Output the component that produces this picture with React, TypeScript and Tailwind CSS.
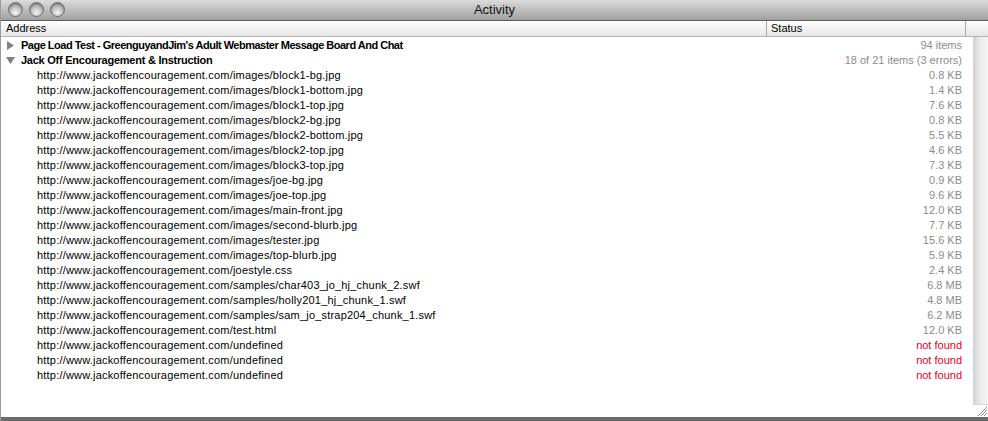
const files = [
  "images/block1-bg.jpg|0.8 KB",
  "images/block1-bottom.jpg|1.4 KB",
  "images/block1-top.jpg|7.6 KB",
  "images/block2-bg.jpg|0.8 KB",
  "images/block2-bottom.jpg|5.5 KB",
  "images/block2-top.jpg|4.6 KB",
  "images/block3-top.jpg|7.3 KB",
  "images/joe-bg.jpg|0.9 KB",
  "images/joe-top.jpg|9.6 KB",
  "images/main-front.jpg|12.0 KB",
  "images/second-blurb.jpg|7.7 KB",
  "images/tester.jpg|15.6 KB",
  "images/top-blurb.jpg|5.9 KB",
  "joestyle.css|2.4 KB",
  "samples/char403_jo_hj_chunk_2.swf|6.8 MB",
  "samples/holly201_hj_chunk_1.swf|4.8 MB",
  "samples/sam_jo_strap204_chunk_1.swf|6.2 MB",
  "test.html|12.0 KB",
  "undefined|not found",
  "undefined|not found",
  "undefined|not found",
];

function Light() {
  return (
    <div className="w-[15px] h-[15px] rounded-full border border-[#6e6e6e] bg-[radial-gradient(circle_at_50%_75%,#f4f4f4_0%,#c4c4c4_45%,#8a8a8a_100%)] shadow-[inset_0_1px_2px_rgba(0,0,0,0.35)]" />
  );
}

function Triangle({ open }: { open?: boolean }) {
  return (
    <svg width="9" height="9" viewBox="0 0 9 9" className="shrink-0">
      {open ? (
        <polygon points="0,1 9,1 4.5,8" fill="#808080" />
      ) : (
        <polygon points="1,0 8,4.5 1,9" fill="#808080" />
      )}
    </svg>
  );
}

export default function App() {
  return (
    <div
      className="w-[988px] h-[421px] flex flex-col overflow-hidden bg-white border-l border-[#9a9a9a] text-[11px] text-black"
      style={{ fontFamily: '"Liberation Sans", Arial, sans-serif' }}
    >
      {/* title bar */}
      <div className="relative h-[21px] shrink-0 flex items-center justify-center bg-gradient-to-b from-[#dcdcdc] to-[#a0a0a0] border-b border-[#5c5c5c]">
        <div className="absolute left-[7px] top-[2px] flex gap-[6px]">
          <Light />
          <Light />
          <Light />
        </div>
        <span className="text-[13px] text-[#111]">Activity</span>
      </div>

      {/* column header */}
      <div className="h-[16px] shrink-0 flex bg-gradient-to-b from-white to-[#e6e6e6] border-b border-[#b5b5b5] leading-[15px]">
        <div className="w-[766px] pl-[5px] border-r border-[#a8a8a8]">Address</div>
        <div className="w-[199px] pl-[4px] border-r border-[#a8a8a8]">Status</div>
        <div className="flex-1" />
      </div>

      {/* body */}
      <div className="flex-1 flex min-h-0">
        <div className="flex-1 flex flex-col pt-[1px] pr-[11px] leading-[15px]">
          <div className="flex items-center h-[15px]">
            <div className="w-[20px] pl-[5px]">
              <Triangle />
            </div>
            <span className="flex-1 font-bold tracking-[-0.5px]">
              Page Load Test - GreenguyandJim's Adult Webmaster Message Board And Chat
            </span>
            <span className="text-[#8c8c8c]">94 items</span>
          </div>
          <div className="flex items-center h-[15px]">
            <div className="w-[20px] pl-[5px]">
              <Triangle open />
            </div>
            <span className="flex-1 font-bold tracking-[-0.25px]">
              Jack Off Encouragement &amp; Instruction
            </span>
            <span className="text-[#8c8c8c]">18 of 21 items (3 errors)</span>
          </div>
          {files.map((f, i) => {
            const [path, status] = f.split("|");
            return (
              <div key={i} className="flex items-center h-[15px]">
                <span className="flex-1 pl-[36px] tracking-[0.2px]">
                  http://www.jackoffencouragement.com/{path}
                </span>
                <span
                  className={status === "not found" ? "text-[#e8001c]" : "text-[#8c8c8c]"}
                >
                  {status}
                </span>
              </div>
            );
          })}
        </div>
        <div className="w-[15px] flex flex-col">
          <div className="flex-1 bg-gradient-to-r from-[#d0d0d0] via-[#ececec] to-[#f4f4f4]" />
          <div className="h-[13px] flex items-end justify-end bg-white border-t border-[#d6d6d6]">
            <svg width="12" height="12" viewBox="0 0 12 12">
              <line x1="2" y1="11" x2="11" y2="2" stroke="#8a8a8a" />
              <line x1="5" y1="11" x2="11" y2="5" stroke="#8a8a8a" />
              <line x1="8" y1="11" x2="11" y2="8" stroke="#8a8a8a" />
            </svg>
          </div>
        </div>
      </div>

      <div className="h-[4px] shrink-0 bg-[#6b6b6b]" />
    </div>
  );
}
